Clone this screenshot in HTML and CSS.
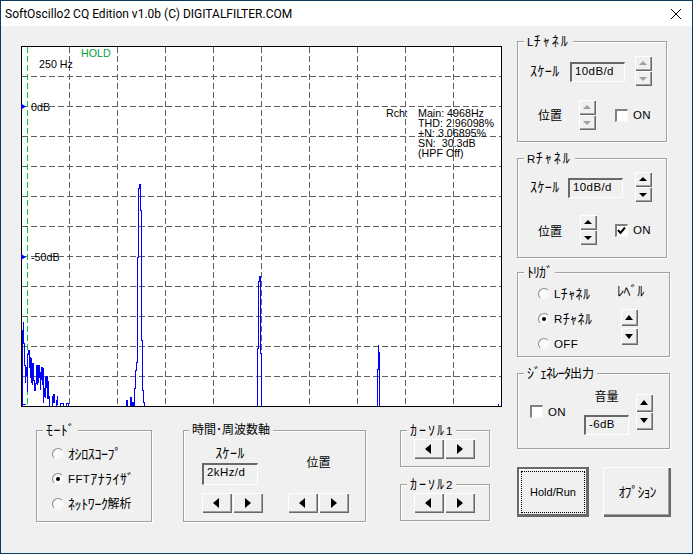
FILE: index.html
```html
<!DOCTYPE html>
<html lang="ja">
<head>
<meta charset="utf-8">
<title>SoftOscillo2 CQ Edition</title>
<link rel="stylesheet" href="styles.css">
</head>
<body>
<div class="window">
  <header class="titlebar">
    <span class="title">SoftOscillo2 CQ Edition v1.0b (C) DIGITALFILTER.COM</span>
    <svg class="close" width="12" height="12" viewBox="0 0 12 12"><path class="close-x" d="M1 1L11 11M11 1L1 11"/></svg>
  </header>
  <main class="client">
    <div class="left">
      <svg class="plot" width="481" height="361" viewBox="21 46 481 361">
        <rect class="plot-bg" x="21.5" y="46.5" width="480" height="360"/>
        <path class="grid" d="M22 76.5H501M22 106.5H501M22 136.5H501M22 166.5H501M22 196.5H501M22 226.5H501M22 256.5H501M22 286.5H501M22 316.5H501M22 346.5H501M22 376.5H501"/>
        <path class="grid" d="M69.5 47V404M117.5 47V404M165.5 47V404M213.5 47V404M261.5 47V404M309.5 47V404M357.5 47V404M405.5 47V404M453.5 47V404"/>
        <path class="cursor" d="M27.5 47V406"/>
        <path class="trace" d="M21.5 406V404H25.5M22.5 406V330H23.5V322V343H24.5V365H25.5V383V367H26.5V375H27.5V392V354H28.5V350H29.5V368V357H30.5V378V358H31.5V383V370H32.5V385V363H33.5V380H34.5V390H35.5V383H36.5V365H37.5V385V367H38.5V383V365H39.5V377H40.5V390V372H41.5V380V367H42.5V385V368H43.5V403V396H44.5V388H45.5V398V377H46.5V388V376H47.5V398H48.5V381V396H49.5V406"/>
        <path class="trace" d="M52.5 406V396H53.5V403V394H54.5V403M56.5 406V400H57.5V396V405M60.5 406V403H63.5V406M66.5 406V403H68.5V406"/>
        <path class="trace" d="M126.5 406V400H127.5V406M130.5 406V397H131.5V406M132.5 406V402H133.5V406M134.5 406V388H135.5V370H136.5V362H137.5V257H138.5V188H139.5V184H140.5V210H141.5V340H142.5V390H143.5V402H144.5V406"/>
        <path class="trace" d="M257.5 406V348H258.5V281H259.5V276H260.5V353H261.5V406"/>
        <path class="trace" d="M377.5 406V369H378.5V345V352H379.5V406M378.5 369V352"/>
        <path class="trace" d="M498.5 406V404"/>
        <rect class="plot-frame" x="21.5" y="46.5" width="480" height="360"/>
        <path class="marker" d="M21 103.5L26 106.5L21 109.5ZM21 254L26 257L21 260Z"/>
        <text class="hold" x="81" y="57">HOLD</text>
        <text class="plot-text" x="39" y="68">250 Hz</text>
        <text class="plot-text" x="31" y="111">0dB</text>
        <text class="plot-text" x="31" y="261">-50dB</text>
        <text class="plot-text" x="386" y="117">Rch:</text>
        <text class="plot-text" x="418" y="117">Main: 4968Hz</text>
        <text class="plot-text" x="418" y="127">THD: 2.96098%</text>
        <text class="plot-text" x="418" y="137">+N: 3.06895%</text>
        <text class="plot-text" x="418" y="147">SN:&#160;&#160;30.3dB</text>
        <text class="plot-text" x="418" y="157">(HPF Off)</text>
      </svg>
      <div class="bottom">
        <section class="group mode">
          <span class="legend kana">ﾓｰﾄﾞ</span>
          <label class="radio-row"><i class="radio"></i><span class="kana tight">ｵｼﾛｽｺｰﾌﾟ</span></label>
          <label class="radio-row"><i class="radio on"></i><span class="spaced">FFT</span><span class="kana">ｱﾅﾗｲｻﾞ</span></label>
          <label class="radio-row"><i class="radio"></i><span class="kana tight">ﾈｯﾄﾜｰｸ</span><span class="kanji">解析</span></label>
        </section>
        <section class="group time">
          <span class="legend kanji legend-time">時間･周波数軸</span>
          <div class="time-scale">
            <span class="kana time-label">ｽｹｰﾙ</span>
            <div class="display d-time">2kHz/d</div>
            <div class="arrows"><button class="btn-h left-a"></button><button class="btn-h right-a"></button></div>
          </div>
          <div class="time-pos">
            <span class="kanji time-label">位置</span>
            <div class="arrows arrows-pos"><button class="btn-h left-a"></button><button class="btn-h right-a"></button></div>
          </div>
        </section>
        <div class="cursors">
          <section class="group cursor-group">
            <span class="legend"><span class="kana wide">ｶｰｿﾙ</span><span class="digit">1</span></span>
            <div class="arrows"><button class="btn-h left-a"></button><button class="btn-h right-a"></button></div>
          </section>
          <section class="group cursor-group">
            <span class="legend"><span class="kana wide">ｶｰｿﾙ</span><span class="digit">2</span></span>
            <div class="arrows"><button class="btn-h left-a"></button><button class="btn-h right-a"></button></div>
          </section>
        </div>
      </div>
    </div>
    <aside class="right">
      <section class="group channel">
        <span class="legend"><span class="digit">L</span><span class="kana wide">ﾁｬﾈﾙ</span></span>
        <div class="ch-row ch-row-top">
          <span class="kana scale-l">ｽｹｰﾙ</span>
          <div class="display d-ch">10dB/d</div>
          <div class="spin spin-a"><button class="btn-v up" disabled></button><button class="btn-v down" disabled></button></div>
        </div>
        <div class="ch-row ch-row-bottom">
          <span class="kanji pos-l">位置</span>
          <div class="spin"><button class="btn-v up" disabled></button><button class="btn-v down" disabled></button></div>
          <label class="check-row check-a"><i class="check"></i><span class="spaced">ON</span></label>
        </div>
      </section>
      <section class="group channel channel-r">
        <span class="legend"><span class="digit">R</span><span class="kana wide">ﾁｬﾈﾙ</span></span>
        <div class="ch-row ch-row-top">
          <span class="kana scale-r">ｽｹｰﾙ</span>
          <div class="display d-ch">10dB/d</div>
          <div class="spin spin-b"><button class="btn-v up"></button><button class="btn-v down"></button></div>
        </div>
        <div class="ch-row ch-row-bottom">
          <span class="kanji pos-r">位置</span>
          <div class="spin"><button class="btn-v up"></button><button class="btn-v down"></button></div>
          <label class="check-row check-b"><i class="check">
            <svg class="tick" width="9" height="9" viewBox="0 0 9 9"><path class="tick-mark" d="M1 4L3.5 7L8 1.5"/></svg>
          </i><span class="spaced">ON</span></label>
        </div>
      </section>
      <section class="group trigger">
        <span class="legend kana narrow">ﾄﾘｶﾞ</span>
        <div class="trigger-radios">
          <label class="radio-row"><i class="radio"></i><span class="spaced">L</span><span class="kana">ﾁｬﾈﾙ</span></label>
          <label class="radio-row"><i class="radio on"></i><span class="spaced">R</span><span class="kana">ﾁｬﾈﾙ</span></label>
          <label class="radio-row"><i class="radio"></i><span class="spaced">OFF</span></label>
        </div>
        <div class="trigger-level">
          <span class="kana tight">ﾚﾍﾞﾙ</span>
          <div class="spin spin-gap spin-level"><button class="btn-v up tall"></button><button class="btn-v down tall"></button></div>
        </div>
      </section>
      <section class="group generator">
        <span class="legend"><span class="kana narrow">ｼﾞｪﾈﾚｰﾀ</span><span class="kanji">出力</span></span>
        <label class="check-row gen-check"><i class="check"></i><span class="spaced">ON</span></label>
        <div class="gen-vol">
          <span class="kanji vol-label">音量</span>
          <div class="display d-gen">-6dB</div>
        </div>
        <div class="spin gen-spin"><button class="btn-v up tall"></button><button class="btn-v down tall"></button></div>
      </section>
      <div class="actions">
        <button class="push default"><span class="focus">Hold/Run</span></button>
        <button class="push option"><span class="kana narrow">ｵﾌﾟｼｮﾝ</span></button>
      </div>
    </aside>
  </main>
</div>
</body>
</html>
```

FILE: styles.css
```css
* { box-sizing: border-box; }
html, body { margin: 0; padding: 0; }
body {
  width: 693px;
  height: 554px;
  overflow: hidden;
  font: 11px/14px "Liberation Sans", "Noto Sans CJK JP", sans-serif;
  color: #000;
  background: #f0f0f0;
}
.window {
  width: 693px;
  height: 554px;
  border: 1px solid #0c3a5c;
  display: flex;
  flex-direction: column;
  background: #f0f0f0;
}
.titlebar {
  height: 25px;
  flex: none;
  background: #fff;
  display: flex;
  align-items: center;
  justify-content: space-between;
  padding: 0 10px 0 4px;
}
.title { font: 12px/16px Roboto, sans-serif; color: #000; white-space: nowrap; }
.close-x { fill: none; stroke: #000; stroke-width: 1; }
.client { flex: 1; display: flex; min-height: 0; }
.left { width: 481px; margin: 20px 0 0 20px; flex: none; }
.plot { display: block; }
.plot-bg { fill: #fff; }
.plot-frame { fill: none; stroke: #000; stroke-width: 1; }
.grid { fill: none; stroke: #606060; stroke-width: 1; stroke-dasharray: 6 3; shape-rendering: crispEdges; }
.cursor { fill: none; stroke: #00c832; stroke-width: 1; stroke-dasharray: 6 3; shape-rendering: crispEdges; }
.trace { fill: none; stroke: #0000ff; stroke-width: 1; shape-rendering: crispEdges; }
.marker { fill: #0000ff; }
.plot-text { font: 10.7px "Liberation Sans", sans-serif; fill: #000; }
.hold { font: 10.7px "Liberation Sans", sans-serif; fill: #00a040; }

.group {
  position: relative;
  border: 1px solid #a0a0a0;
  box-shadow: 1px 1px 0 #fff, inset 1px 1px 0 #fff;
}
.legend {
  position: absolute;
  top: -8px;
  left: 6px;
  padding: 0 3px;
  background: #f0f0f0;
  white-space: nowrap;
}
.kana { font-size: 14px; letter-spacing: 0.4px; }
.kana.tight { letter-spacing: -0.4px; }
.kana.wide { letter-spacing: 2px; }
.kana.narrow { letter-spacing: -1px; }
.kanji { font-size: 12px; }
.spaced, .digit { letter-spacing: 0.4px; font-size: 11.5px; }
.legend-time { left: 5px; }

.bottom { display: flex; margin: 23px 0 0 15px; }
.mode {
  width: 116px; height: 92px; flex: none;
  padding: 16px 0 0 15px;
  display: flex; flex-direction: column; gap: 11px;
}
.time {
  width: 183px; height: 92px; flex: none;
  margin-left: 31px;
  padding-left: 18px;
  display: flex;
}
.time-scale { width: 86px; padding-top: 15px; }
.time-label { display: block; width: 56px; text-align: center; }
.time-pos { padding-top: 25px; }
.time-pos .time-label { width: 61px; }
.d-time { width: 56px; height: 22px; margin-top: 3px; }
.time-scale .arrows { margin-top: 8px; }
.arrows-pos { margin-top: 23px; }
.cursors { margin-left: 34px; display: flex; flex-direction: column; gap: 17px; flex: none; }
.cursor-group { width: 90px; height: 37px; padding: 8px 0 0 13px; }

.arrows { display: flex; gap: 1px; }
button {
  display: block;
  margin: 0;
  padding: 0;
  font: inherit;
  color: inherit;
  background: #f0f0f0;
  border: 0;
  border-radius: 0;
  box-shadow: inset 1px 1px 0 #fff, inset -1px -1px 0 #696969, inset -2px -2px 0 #a0a0a0;
}
.btn-h { width: 30px; height: 20px; position: relative; }
.btn-h::before {
  content: "";
  position: absolute;
  top: 5px;
  width: 0; height: 0;
  border-style: solid;
  border-color: transparent;
  border-width: 5px 0;
}
.left-a::before { left: 11px; border-right: 6px solid #000; }
.right-a::before { left: 12px; border-left: 6px solid #000; }

.spin { display: flex; flex-direction: column; flex: none; width: 17px; }
.btn-v { width: 17px; height: 15px; position: relative; }
.tall { height: 18px; }
.btn-v::before {
  content: "";
  position: absolute;
  left: 4px;
  width: 0; height: 0;
  border-style: solid;
  border-color: transparent;
  border-width: 0 4px;
}
.up::before { top: 5px; border-bottom: 4px solid #000; }
.down::before { top: 6px; border-top: 4px solid #000; }
.tall.up::before { top: 6px; border-bottom-width: 5px; }
.tall.down::before { top: 6px; border-top-width: 5px; }
.btn-v:disabled::before { border-bottom-color: #a0a0a0; border-top-color: #a0a0a0; }
.spin-gap { gap: 2px; }
.spin-level .btn-v { height: 17px; }

.display {
  background: #f0f0f0;
  border-style: solid;
  border-width: 2px 1px 1px 2px;
  border-color: #696969 #fff #fff #696969;
  padding: 0 0 0 3px;
  line-height: 15px;
  font-size: 11.5px;
  letter-spacing: 0.4px;
  flex: none;
}
.d-ch { width: 55px; height: 20px; margin-top: 2px; }
.d-gen { width: 45px; height: 20px; margin-top: 11px; }

.radio-row, .check-row { display: flex; align-items: center; }
.radio {
  display: block;
  position: relative;
  flex: none;
  width: 12px; height: 12px;
  border-radius: 50%;
  background: #fafafa;
  border: 1px solid;
  border-color: #8a8a8a #f4f4f4 #f4f4f4 #8a8a8a;
  margin-right: 4px;
}
.radio.on::after {
  content: "";
  position: absolute;
  left: 3px; top: 3px;
  width: 4px; height: 4px;
  border-radius: 50%;
  background: #000;
}
.check {
  display: block;
  position: relative;
  flex: none;
  width: 13px; height: 13px;
  background: #fff;
  border-style: solid;
  border-width: 2px 1px 1px 2px;
  border-color: #808080 #f8f8f8 #f8f8f8 #808080;
  margin-right: 5px;
}
.tick { position: absolute; left: 0; top: 0; }
.tick-mark { fill: none; stroke: #000; stroke-width: 2; }

.right { margin: 15px 0 0 15px; width: 160px; flex: none; }
.channel { width: 150px; height: 101px; }
.channel-r { height: 100px; margin-top: 16px; }
.ch-row { display: flex; align-items: center; }
.ch-row-top { padding: 14px 0 0 12px; }
.channel-r .ch-row-top { padding-top: 13px; }
.ch-row-bottom { padding: 14px 0 0 20px; }
.channel-r .ch-row-bottom { padding-top: 13px; }
.scale-l { width: 40px; flex: none; }
.scale-r { width: 38px; flex: none; }
.pos-l { width: 41px; flex: none; margin-top: 2px; }
.pos-r { width: 42px; flex: none; margin-top: 4px; }
.spin-a { margin-left: 10px; }
.spin-b { margin-left: 12px; }
.check-a { margin-left: 19px; }
.check-b { margin-left: 18px; }

.trigger { width: 153px; height: 85px; margin-top: 14px; display: flex; }
.trigger-radios {
  width: 79px; margin-left: 20px; padding-top: 14px; flex: none;
  display: flex; flex-direction: column; gap: 11px;
}
.trigger-level { padding-top: 11px; }
.spin-level { margin: 10px 0 0 4px; }

.generator { width: 153px; height: 76px; margin-top: 16px; display: flex; }
.gen-check { width: 54px; height: 13px; margin: 31px 0 0 12px; flex: none; }
.gen-vol { width: 45px; padding-top: 16px; flex: none; }
.vol-label { display: block; text-align: center; }
.gen-spin { margin: 20px 0 0 7px; }

.actions { display: flex; margin-top: 18px; width: 154px; justify-content: space-between; }
.push { height: 50px; }
.default {
  width: 72px;
  padding: 3px;
  box-shadow: inset 0 0 0 2px #696969, inset -3px -3px 0 #696969, inset 3px 3px 0 #fff;
}
.focus {
  display: flex;
  align-items: center;
  justify-content: center;
  margin: 1px;
  height: 42px;
  border: 1px dotted #000;
}
.option { width: 68px; box-shadow: inset 1px 1px 0 #fff, inset -2px -2px 0 #696969, inset -3px -3px 0 #a0a0a0; }
```
